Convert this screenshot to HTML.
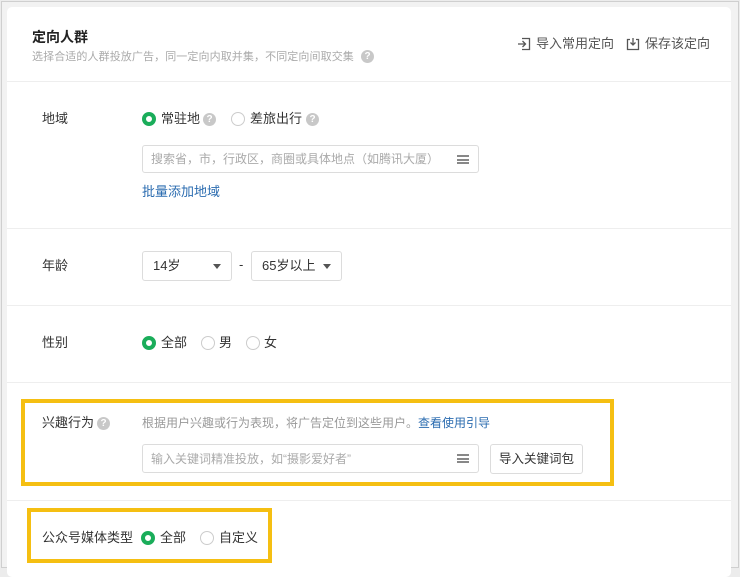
<!DOCTYPE html>
<html><head><meta charset="utf-8"><style>
*{margin:0;padding:0;box-sizing:border-box}
body{width:740px;height:568px;background:#ececec;font-family:"Liberation Sans","Noto Sans CJK SC",sans-serif;font-size:13px;line-height:18px;color:#333;position:relative;overflow:hidden}
.frame{position:absolute;left:1px;top:1px;right:1px;bottom:0;border:1px solid #cfcfcf;background:#f2f2f2}
.card{position:absolute;left:7px;top:7px;width:724px;height:570px;background:#fff;border-radius:5px}
.a{position:absolute;white-space:nowrap}
.hr{position:absolute;left:7px;width:724px;height:1px;background:#eeeeee}
.radio{position:absolute;width:14px;height:14px;border-radius:50%;border:1px solid #ccc;background:#fff}
.radio.on{border:4px solid #1aad5a}
.q{position:absolute;width:13px;height:13px;border-radius:50%;background:#c8c8c8;color:#fff;font-size:10px;line-height:13px;text-align:center;font-weight:bold}
.box{position:absolute;border:1px solid #dcdcdc;border-radius:3px;background:#fff}
.menu{position:absolute;width:12px;height:9px;border-top:2px solid #888;border-bottom:2px solid #888}
.menu:after{content:"";position:absolute;left:0;right:0;top:1.5px;height:2px;background:#888}
.tri{position:absolute;width:0;height:0;border-left:4px solid transparent;border-right:4px solid transparent;border-top:5px solid #555}
.y{position:absolute;border:4px solid #f5bf12}
</style></head><body>
<div class="frame"></div>
<div class="card"></div>
<div class="a" style="left:32px;top:28px;font-size:14px;font-weight:bold;color:#222">定向人群</div>
<div class="a" style="left:32px;top:48px;font-size:11px;letter-spacing:0.1px;color:#aaa">选择合适的人群投放广告，同一定向内取并集，不同定向间取交集</div>
<div class="q" style="left:361px;top:50px">?</div>
<svg class="a" style="left:517px;top:37px" width="14" height="14" viewBox="0 0 14 14" fill="none" stroke="#555" stroke-width="1.3"><path d="M5 1.5h7.5v11H5M1 7h7M5.5 4l3 3-3 3"/></svg>
<div class="a" style="left:536px;top:35px;color:#555">导入常用定向</div>
<svg class="a" style="left:626px;top:37px" width="14" height="14" viewBox="0 0 14 14" fill="none" stroke="#555" stroke-width="1.3"><path d="M4 2.5H1.5v10h11v-10H10M7 1v7M4.5 5.5 7 8l2.5-2.5"/></svg>
<div class="a" style="left:645px;top:35px;color:#555">保存该定向</div>
<div class="hr" style="top:81px"></div>

<div class="a" style="left:42px;top:110px">地域</div>
<div class="radio on" style="left:142px;top:112px"></div>
<div class="a" style="left:161px;top:110px">常驻地</div>
<div class="q" style="left:203px;top:113px">?</div>
<div class="radio" style="left:231px;top:112px"></div>
<div class="a" style="left:250px;top:110px">差旅出行</div>
<div class="q" style="left:306px;top:113px">?</div>
<div class="box" style="left:142px;top:145px;width:337px;height:28px"></div>
<div class="a" style="left:151px;top:150px;color:#aaa;font-size:12px">搜索省，市，行政区，商圈或具体地点（如腾讯大厦）</div>
<div class="menu" style="left:457px;top:155px"></div>
<div class="a" style="left:142px;top:183px;color:#2b6cb0">批量添加地域</div>
<div class="hr" style="top:228px"></div>

<div class="a" style="left:42px;top:257px">年龄</div>
<div class="box" style="left:142px;top:251px;width:90px;height:30px"></div>
<div class="a" style="left:153px;top:257px">14岁</div>
<div class="tri" style="left:213px;top:264px"></div>
<div class="a" style="left:239px;top:256px">-</div>
<div class="box" style="left:251px;top:251px;width:91px;height:30px"></div>
<div class="a" style="left:262px;top:257px">65岁以上</div>
<div class="tri" style="left:323px;top:264px"></div>
<div class="hr" style="top:305px"></div>

<div class="a" style="left:42px;top:334px">性别</div>
<div class="radio on" style="left:142px;top:336px"></div>
<div class="a" style="left:161px;top:334px">全部</div>
<div class="radio" style="left:201px;top:336px"></div>
<div class="a" style="left:219px;top:334px">男</div>
<div class="radio" style="left:246px;top:336px"></div>
<div class="a" style="left:264px;top:334px">女</div>
<div class="hr" style="top:382px"></div>

<div class="y" style="left:21px;top:399px;width:593px;height:87px"></div>
<div class="a" style="left:42px;top:414px">兴趣行为</div>
<div class="q" style="left:97px;top:417px">?</div>
<div class="a" style="left:142px;top:414px;color:#999;font-size:12px">根据用户兴趣或行为表现，将广告定位到这些用户。<span style="color:#2b6cb0">查看使用引导</span></div>
<div class="box" style="left:142px;top:444px;width:337px;height:29px"></div>
<div class="a" style="left:151px;top:450px;color:#aaa;font-size:12px">输入关键词精准投放，如“摄影爱好者”</div>
<div class="menu" style="left:457px;top:454px"></div>
<div class="box" style="left:490px;top:444px;width:93px;height:30px"></div>
<div class="a" style="left:499px;top:450px;font-size:12.5px">导入关键词包</div>
<div class="hr" style="top:500px"></div>

<div class="y" style="left:27px;top:508px;width:245px;height:55px"></div>
<div class="a" style="left:42px;top:529px">公众号媒体类型</div>
<div class="radio on" style="left:141px;top:531px"></div>
<div class="a" style="left:160px;top:529px">全部</div>
<div class="radio" style="left:200px;top:531px"></div>
<div class="a" style="left:219px;top:529px">自定义</div>
</body></html>
